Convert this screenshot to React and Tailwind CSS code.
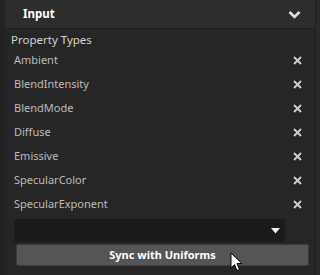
import React from 'react';

const props = [
    'Ambient',
    'BlendIntensity',
    'BlendMode',
    'Diffuse',
    'Emissive',
    'SpecularColor',
    'SpecularExponent',
];

const Cross = () => (
    <svg width="9" height="9" viewBox="0 0 9 9" className="block">
        <path d="M1 1 L8 8 M8 1 L1 8" stroke="#d0d0d0" strokeWidth="1.8" />
    </svg>
);

const App = () => {
    return (
        <div
            className="w-[320px] h-[275px] bg-[#232323] flex overflow-hidden relative"
            style={{ fontFamily: '"Noto Sans", "Open Sans", sans-serif' }}
        >
            <div className="w-[5px] bg-[#222222]" />
            <div className="flex-1 flex flex-col bg-[#262626]">
                {/* Header */}
                <div className="h-[29px] bg-[#2d2d2d] border-b border-[#1e1e1e] flex items-center justify-between pl-[18px] pr-[14px]">
                    <span className="text-white text-[11.5px] font-bold">Input</span>
                    <svg width="13" height="9" viewBox="0 0 13 9">
                        <path d="M1.5 2 L6.5 7 L11.5 2" stroke="#e0e0e0" strokeWidth="2.6" fill="none" />
                    </svg>
                </div>

                <div className="pl-[6px] pt-[2px] text-[11.5px] text-[#d4d4d4] h-[19px] leading-[18px]">Property Types</div>

                <div className="flex flex-col">
                    {props.map((p) => (
                        <div key={p} className="h-[24px] flex items-center justify-between pl-[9px] pr-[13px]">
                            <span className="text-[11px] text-[#bdbdbd]">{p}</span>
                            <Cross />
                        </div>
                    ))}
                </div>

                {/* Dropdown */}
                <div className="mt-[3px] ml-[9px] w-[271px] h-[23px] bg-[#1b1b1b] flex items-center justify-end pr-[5px]">
                    <svg width="9" height="6" viewBox="0 0 9 6">
                        <path d="M0 0 L9 0 L4.5 5.5 Z" fill="#f0f0f0" />
                    </svg>
                </div>

                {/* Button */}
                <div className="mt-[2px] ml-[11px] w-[293px] h-[22px] bg-[#555555] border border-[#3a3a3a] rounded-[2px] flex items-center justify-center">
                    <span className="text-white text-[11px] font-bold">Sync with Uniforms</span>
                </div>
            </div>
            <div className="w-[5px] bg-[#2a2a2a] border-l border-[#1f1f1f]" />

            {/* Cursor */}
            <svg className="absolute left-[230px] top-[252px]" width="14" height="20" viewBox="0 0 14 20">
                <path d="M1 1 L1 16 L4.5 12.5 L7 18.5 L9.5 17.5 L7 11.5 L12 11.5 Z" fill="#ffffff" stroke="#000000" strokeWidth="1" />
            </svg>
        </div>
    );
};

export default App;
